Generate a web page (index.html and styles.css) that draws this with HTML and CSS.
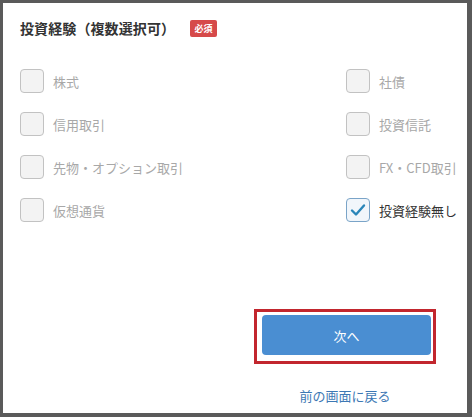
FILE: index.html
```html
<!DOCTYPE html>
<html lang="ja">
<head>
<meta charset="utf-8">
<link rel="stylesheet" href="styles.css">
</head>
<body>
<div class="panel">
  <div class="title-row">
    <h1 class="title">投資経験（複数選択可）</h1>
    <span class="badge">必須</span>
  </div>
  <div class="options">
    <label class="opt"><span class="box"></span><span class="txt">株式</span></label>
    <label class="opt"><span class="box"></span><span class="txt">社債</span></label>
    <label class="opt"><span class="box"></span><span class="txt">信用取引</span></label>
    <label class="opt"><span class="box"></span><span class="txt">投資信託</span></label>
    <label class="opt"><span class="box"></span><span class="txt">先物・オプション取引</span></label>
    <label class="opt"><span class="box"></span><span class="txt">FX・CFD取引</span></label>
    <label class="opt"><span class="box"></span><span class="txt">仮想通貨</span></label>
    <label class="opt checked"><span class="box"><svg width="16" height="14" viewBox="0 0 16 14"><path d="M2 7.5 L6 11.5 L14 2.5" fill="none" stroke="#2a86b9" stroke-width="2.4" stroke-linecap="round" stroke-linejoin="round"/></svg></span><span class="txt">投資経験無し</span></label>
  </div>
  <div class="footer">
    <div class="actions">
      <div class="highlight"><button class="next">次へ</button></div>
      <a class="back" href="#">前の画面に戻る</a>
    </div>
  </div>
</div>
</body>
</html>
```
FILE: styles.css
```css
html, body {
  margin: 0;
  padding: 0;
}
body {
  background: #5a5a5a;
  width: 472px;
  height: 417px;
  overflow: hidden;
  font-family: "Noto Sans CJK JP", "Noto Sans", sans-serif;
}
.panel {
  margin: 3px 5px 4px 3px;
  height: 410px;
  background: #fff;
  box-sizing: border-box;
  padding: 17px 0 0 17px;
}
.title-row {
  display: flex;
  align-items: center;
  height: 17px;
  gap: 15px;
}
.title {
  margin: 0;
  font-size: 14px;
  font-weight: bold;
  color: #333;
  line-height: 17px;
  letter-spacing: 0.1px;
}
.badge {
  background: #d64a4a;
  color: #fff;
  font-size: 9px;
  font-weight: bold;
  line-height: 17px;
  height: 17px;
  width: 27px;
  text-align: center;
  border-radius: 2px;
}
.options {
  margin-top: 32px;
  display: grid;
  grid-template-columns: 326px 1fr;
  row-gap: 19px;
}
.opt {
  display: flex;
  align-items: center;
  height: 24px;
}
.box {
  width: 24px;
  height: 24px;
  box-sizing: border-box;
  border: 1.5px solid #c2c2c2;
  border-radius: 4px;
  background: #f3f3f3;
  display: flex;
  align-items: center;
  justify-content: center;
  flex: none;
}
.txt {
  margin-left: 9px;
  font-size: 13px;
  color: #a8a8a8;
  white-space: nowrap;
}
.checked .box {
  border-color: #7aa4c8;
  background: #f1f6fb;
}
.checked .txt {
  color: #333;
}
.footer {
  display: flex;
  justify-content: flex-end;
  margin-top: 87px;
  padding-right: 31px;
}
.actions {
  display: flex;
  flex-direction: column;
  align-items: center;
  width: 182px;
}
.highlight {
  border: 3px solid #c2262e;
  padding: 3px 2px 2px 5px;
  width: 182px;
  height: 55px;
  box-sizing: border-box;
}
.next {
  display: block;
  width: 169px;
  height: 40px;
  border: none;
  border-radius: 4px;
  background: #4a8ed2;
  color: #fff;
  font-family: inherit;
  font-size: 13px;
  padding: 0;
}
.back {
  margin-top: 23px;
  font-size: 13px;
  line-height: 18px;
  color: #3d78b4;
  text-decoration: none;
}
```
